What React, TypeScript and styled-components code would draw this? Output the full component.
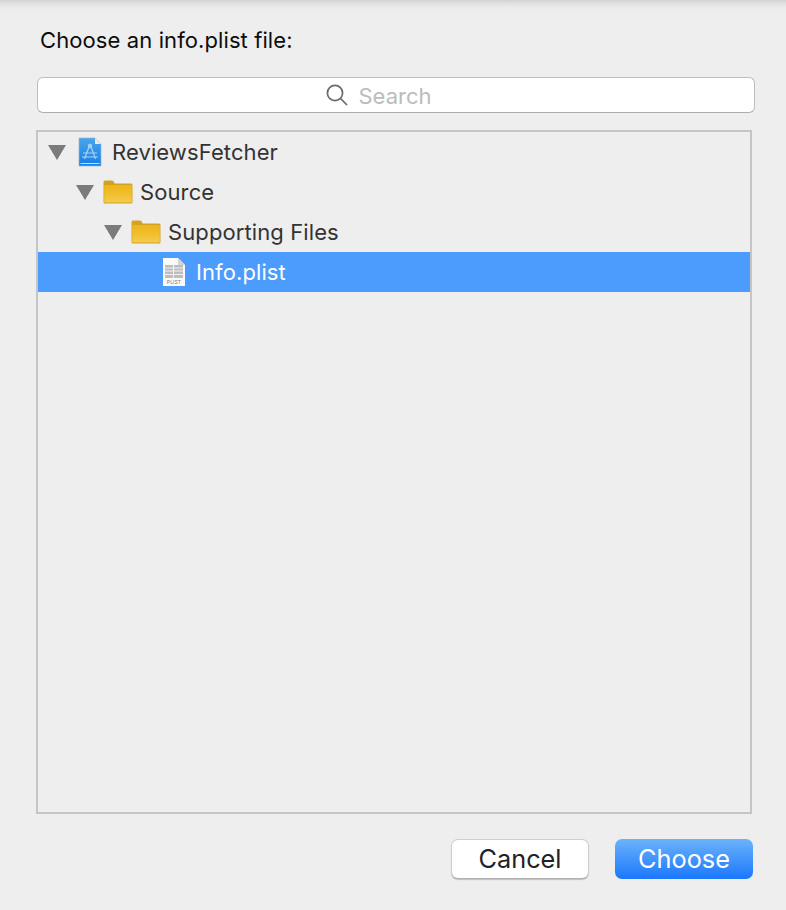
import styled, { createGlobalStyle } from "styled-components";

const GlobalStyle = createGlobalStyle`
    html, body {
        margin: 0;
        padding: 0;
        background: #eeeeee;
    }
    * {
        box-sizing: border-box;
    }
`;

const Dialog = styled.div`
    width: 786px;
    height: 910px;
    display: flex;
    flex-direction: column;
    padding: 0 33px 31px 36px;
    background: linear-gradient(to bottom, #d2d2d2 0, #e2e2e2 4px, #ebebeb 8px, #eeeeee 12px);
    font-family: Inter, "Liberation Sans", sans-serif;
`;

const Title = styled.div`
    margin: 26px 0 0 4px;
    height: 28px;
    font-size: 22px;
    line-height: 28px;
    letter-spacing: 0.1px;
    color: #0c0c0c;
`;

const SearchField = styled.div`
    margin: 23px -2px 0 1px;
    height: 36px;
    display: flex;
    align-items: center;
    justify-content: center;
    gap: 10px;
    padding-right: 34px;
    background: #ffffff;
    border: 1px solid #bdbdbd;
    border-bottom-color: #adadad;
    border-radius: 6px;
`;

const SearchText = styled.span`
    margin-top: 2px;
    font-size: 22px;
    color: #bcbcbc;
`;

const Tree = styled.div`
    margin-top: 17px;
    width: 716px;
    height: 684px;
    border: 2px solid #c5c5c5;
    background: #eeeeee;
`;

const Row = styled.div<{ $depth: number; $selected?: boolean }>`
    height: 40px;
    display: flex;
    align-items: center;
    padding-left: ${(props) => 10 + props.$depth * 28}px;
    background: ${(props) => (props.$selected ? "#4c9cfd" : "transparent")};
    color: ${(props) => (props.$selected ? "#ffffff" : "#333333")};
    font-size: 22px;
    letter-spacing: 0.1px;
`;

const Disclosure = styled.span<{ $hidden?: boolean }>`
    width: 0;
    height: 0;
    border-left: 9px solid transparent;
    border-right: 9px solid transparent;
    border-top: 15px solid #7b7b7b;
    margin-right: 12px;
    visibility: ${(props) => (props.$hidden ? "hidden" : "visible")};
`;

const IconSlot = styled.span`
    width: 32px;
    display: flex;
    justify-content: center;
    margin-right: 6px;
    margin-left: -4px;
`;

const Footer = styled.div`
    margin-top: 25px;
    display: flex;
    justify-content: flex-end;
    gap: 26px;
`;

const Button = styled.button<{ $primary?: boolean }>`
    width: 138px;
    height: 40px;
    padding: 0 0 1px;
    font-family: inherit;
    font-size: 25.3px;
    border-radius: 7px;
    ${(props) =>
        props.$primary
            ? `
    color: #ffffff;
    border: none;
    background: linear-gradient(to bottom, #6cb2fb 0%, #1b78fd 100%);
    `
            : `
    color: #222222;
    background: #ffffff;
    border: 1px solid #cfcfcf;
    border-bottom-color: #b0b0b0;
    box-shadow: 0 1px 1px rgba(0, 0, 0, 0.2);
    `}
`;

const SearchIcon = () => (
    <svg width="22" height="22" viewBox="0 0 22 22" fill="none" stroke="#6a6a6a" strokeWidth="1.7">
        <circle cx="9" cy="9" r="7.6" />
        <path d="M14.5 14.5 L21 21" />
    </svg>
);

const FolderIcon = () => (
    <svg width="30" height="24" viewBox="0 0 30 24">
        <defs>
            <linearGradient id="folderFill" x1="0" y1="0" x2="0" y2="1">
                <stop offset="0" stopColor="#ecb418" />
                <stop offset="0.55" stopColor="#f0c030" />
                <stop offset="1" stopColor="#f4cc4e" />
            </linearGradient>
        </defs>
        <path d="M0.5 2 Q0.5 0.5 2 0.5 H9 Q10.5 0.5 11.2 2.5 L11.5 3.5 H28 Q29.5 3.5 29.5 5 V22 Q29.5 23.5 28 23.5 H2 Q0.5 23.5 0.5 22 Z" fill="#d3a21f" />
        <path d="M1.2 5 H28.8 V21.8 Q28.8 22.6 28 22.6 H2 Q1.2 22.6 1.2 21.8 Z" fill="url(#folderFill)" />
    </svg>
);

const ProjectIcon = () => (
    <svg width="24" height="30" viewBox="0 0 24 30">
        <defs>
            <linearGradient id="projectFill" x1="0" y1="0" x2="0" y2="1">
                <stop offset="0" stopColor="#4aa6ea" />
                <stop offset="1" stopColor="#157fe6" />
            </linearGradient>
        </defs>
        <path d="M1 1 H17 L23 7 V29 H1 Z" fill="url(#projectFill)" stroke="#8fb8d8" strokeWidth="0.7" />
        <path d="M17 1 L23 7 H17 Z" fill="#e6eef5" />
        <path d="M2.5 26.5 H21.5" stroke="#d5e8f8" strokeWidth="0.9" />
        <g stroke="#a9d2f2" strokeWidth="1.2" fill="none">
            <path d="M12 7 L6.5 22 M12 7 L17.5 22" />
            <path d="M5 16 H19 M4 20 H20" />
            <circle cx="12" cy="9" r="1.6" />
        </g>
    </svg>
);

const PlistIcon = () => (
    <svg width="24" height="30" viewBox="0 0 24 30">
        <path d="M1 1 H16 L23 8 V29 H1 Z" fill="#fafafa" />
        <path d="M16 1 L23 8 H16 Z" fill="#d4d4d4" />
        <rect x="3" y="8" width="18" height="13" fill="#bdbdbd" />
        <g stroke="#ffffff" strokeWidth="0.8">
            <path d="M3 11 H21 M3 14 H21 M3 17.5 H21 M11.5 8 V21" />
        </g>
        <text x="12" y="27" textAnchor="middle" fontSize="5" fill="#777777" fontFamily="Inter, sans-serif">
            PLIST
        </text>
    </svg>
);

export default function App() {
    return (
        <Dialog>
            <GlobalStyle />
            <Title>Choose an info.plist file:</Title>
            <SearchField>
                <SearchIcon />
                <SearchText>Search</SearchText>
            </SearchField>
            <Tree>
                <Row $depth={0}>
                    <Disclosure />
                    <IconSlot>
                        <ProjectIcon />
                    </IconSlot>
                    ReviewsFetcher
                </Row>
                <Row $depth={1}>
                    <Disclosure />
                    <IconSlot>
                        <FolderIcon />
                    </IconSlot>
                    Source
                </Row>
                <Row $depth={2}>
                    <Disclosure />
                    <IconSlot>
                        <FolderIcon />
                    </IconSlot>
                    Supporting Files
                </Row>
                <Row $depth={3} $selected>
                    <Disclosure $hidden />
                    <IconSlot>
                        <PlistIcon />
                    </IconSlot>
                    Info.plist
                </Row>
            </Tree>
            <Footer>
                <Button>Cancel</Button>
                <Button $primary>Choose</Button>
            </Footer>
        </Dialog>
    );
}
